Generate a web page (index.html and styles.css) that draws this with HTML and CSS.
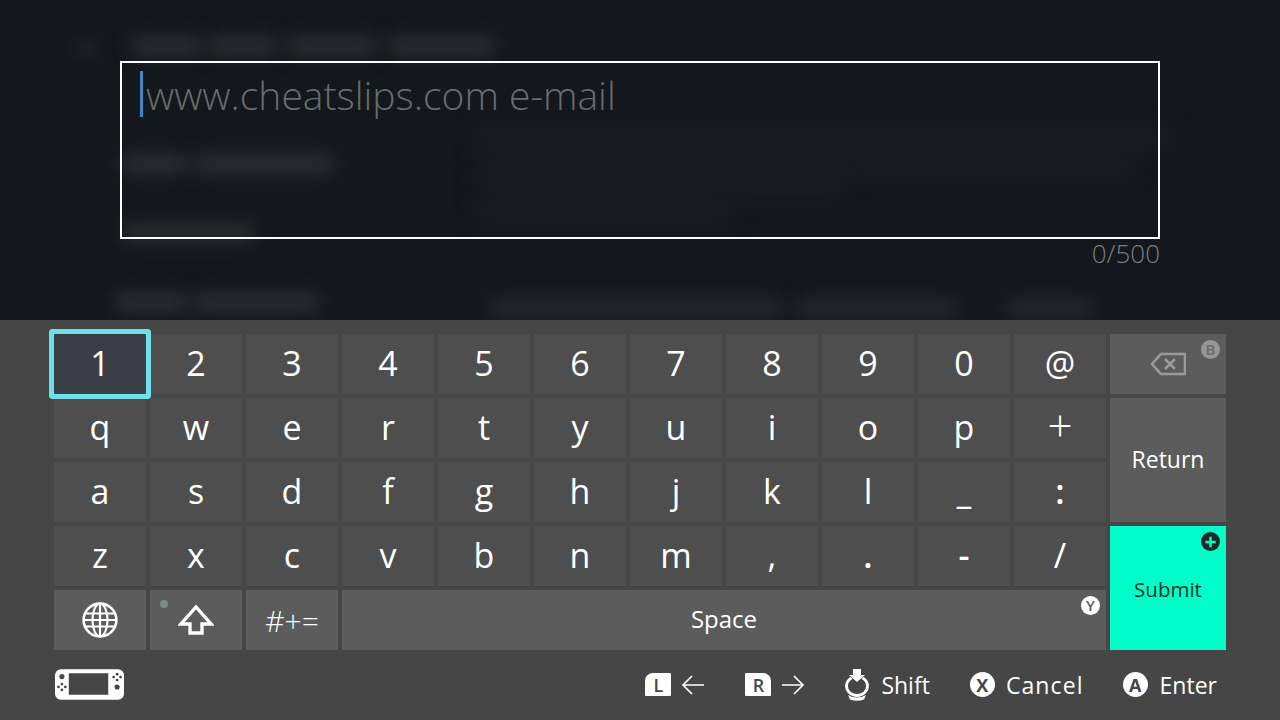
FILE: index.html
```html
<!DOCTYPE html>
<html lang="en">
<head>
<meta charset="utf-8">
<title>Keyboard</title>
<link rel="stylesheet" href="styles.css">
</head>
<body>
<main class="screen">
  <section class="top">
    <div class="backdrop" aria-hidden="true">
      <i class="smear s1"></i><i class="smear s2a"></i><i class="smear s2b"></i><i class="smear s2c"></i><i class="smear s2d"></i>
      <i class="smear s3a"></i><i class="smear s3b"></i><i class="smear s4"></i><i class="smear s5a"></i><i class="smear s5b"></i>
      <i class="smear faint s6"></i><i class="smear faint s7"></i><i class="smear faint s8"></i><i class="smear faint s9"></i>
      <i class="smear s10a"></i><i class="smear s10b"></i><i class="smear s10c"></i>
    </div>
    <div class="field">
      <span class="caret"></span><span class="placeholder">www.cheatslips.com e-mail</span>
    </div>
    <div class="count">0/500</div>
  </section>
  <section class="panel">
    <div class="keys">
      <button class="key selected">1</button><button class="key">2</button><button class="key">3</button><button class="key">4</button><button class="key">5</button><button class="key">6</button><button class="key">7</button><button class="key">8</button><button class="key">9</button><button class="key">0</button><button class="key">@</button>
      <button class="key fn backspace">
        <svg viewBox="0 0 36 24" width="36" height="24"><path d="M35 2H11L2 12l9 10h24z" fill="none" stroke="#9a9a9a" stroke-width="2.6"/><path d="M15 7l10 10M25 7L15 17" stroke="#9a9a9a" stroke-width="2.6" fill="none"/></svg>
        <span class="badge b-grey">B</span>
      </button>
      <button class="key">q</button><button class="key">w</button><button class="key">e</button><button class="key">r</button><button class="key">t</button><button class="key">y</button><button class="key">u</button><button class="key">i</button><button class="key">o</button><button class="key">p</button><button class="key big">+</button>
      <button class="key fn label return">Return</button>
      <button class="key">a</button><button class="key">s</button><button class="key">d</button><button class="key">f</button><button class="key">g</button><button class="key">h</button><button class="key">j</button><button class="key">k</button><button class="key">l</button><button class="key bold">_</button><button class="key bold">:</button>
      <button class="key">z</button><button class="key">x</button><button class="key">c</button><button class="key">v</button><button class="key">b</button><button class="key">n</button><button class="key">m</button><button class="key">,</button><button class="key bold">.</button><button class="key bold">-</button><button class="key">/</button>
      <button class="key submit label">Submit
        <span class="badge b-dark"><svg viewBox="0 0 20 20" width="20" height="20"><path d="M10 4.5v11M4.5 10h11" stroke="#00ffc8" stroke-width="2.6"/></svg></span>
      </button>
      <button class="key fn">
        <svg viewBox="0 0 36 36" width="36" height="36" fill="none" stroke="#fff" stroke-width="2.2"><circle cx="18" cy="18" r="16.4" stroke-width="2.6"/><ellipse cx="18" cy="18" rx="7.5" ry="16.4"/><path d="M18 2v32M3 11.5h30M2 18h32M3 24.5h30"/></svg>
      </button>
      <button class="key fn shift">
        <span class="dot"></span>
        <svg viewBox="0 0 36 32" width="36" height="32"><path d="M18 3L3 20h9v9h12v-9h9z" fill="none" stroke="#fff" stroke-width="3.4" stroke-linejoin="miter"/></svg>
      </button>
      <button class="key fn label sym">#+=</button>
      <button class="key fn label space">Space<span class="badge b-white">Y</span></button>
    </div>
    <footer class="hints">
      <svg viewBox="0 0 70 31" width="69" height="31">
        <path fill-rule="evenodd" fill="#fff" d="M6 0h58a6 6 0 0 1 6 6v19a6 6 0 0 1-6 6H6a6 6 0 0 1-6-6V6a6 6 0 0 1 6-6zM14 4v22h40V4z"/>
        <g fill="#464646"><circle cx="7" cy="7.500" r="2.600"/><circle cx="63" cy="18" r="2.600"/><circle cx="7" cy="15" r="1.400"/><circle cx="3.500" cy="18" r="1.400"/><circle cx="10.500" cy="18" r="1.400"/><circle cx="7" cy="21" r="1.400"/><circle cx="63" cy="5" r="1.400"/><circle cx="59.500" cy="8" r="1.400"/><circle cx="66.500" cy="8" r="1.400"/><circle cx="63" cy="11" r="1.400"/></g>
      </svg>
      <div class="hint-list">
        <div class="hint arrows">
          <span class="shoulder left">L</span>
          <svg viewBox="0 0 24 20" width="24" height="20"><path d="M23 10H2M11 1l-9 9 9 9" fill="none" stroke="#fff" stroke-width="1.700"/></svg>
        </div>
        <div class="hint arrows tight">
          <span class="shoulder right">R</span>
          <svg viewBox="0 0 24 20" width="24" height="20"><path d="M1 10h21M13 1l9 9-9 9" fill="none" stroke="#fff" stroke-width="1.700"/></svg>
        </div>
        <div class="hint stick">
          <svg viewBox="0 0 28 34" width="28" height="34">
            <ellipse cx="14" cy="18" rx="10.500" ry="9.500" fill="none" stroke="#fff" stroke-width="2.800"/>
            <path d="M5 27q9 5 18 0l-2 4.500q-7 2.500-14 0z" fill="#fff"/>
            <path d="M10 1h8v6h4l-8 7-8-7h4z" fill="#fff" stroke="#464646" stroke-width="1.200" paint-order="stroke"/>
          </svg>
          <span>Shift</span>
        </div>
        <div class="hint cancel"><span class="btn">X</span><span class="wide">Cancel</span></div>
        <div class="hint enter"><span class="btn">A</span><span>Enter</span></div>
      </div>
    </footer>
  </section>
</main>
</body>
</html>
```
FILE: styles.css
```css
* { box-sizing: border-box; }
html, body { margin: 0; padding: 0; }
body { width: 1280px; height: 720px; overflow: hidden; background: #13181c; font-family: "Open Sans", "Noto Sans", sans-serif; color: #fff; }
.screen { display: flex; flex-direction: column; width: 1280px; height: 720px; }

.top { position: relative; height: 320px; padding: 61px 120px 0; background: #13181c; overflow: hidden; }
.backdrop { position: absolute; inset: 0; }
.smear { position: absolute; display: block; background: #2a2e32; border-radius: 8px; filter: blur(9px); }
.smear.faint { background: #191e22; filter: blur(10px); }
.s1 { left: 74px; top: 42px; width: 24px; height: 14px; background: #22272a; }
.s2a { left: 132px; top: 36px; width: 72px; height: 20px; }
.s2b { left: 208px; top: 36px; width: 70px; height: 20px; }
.s2c { left: 286px; top: 36px; width: 92px; height: 20px; }
.s2d { left: 388px; top: 36px; width: 108px; height: 20px; }
.s3a { left: 120px; top: 154px; width: 70px; height: 20px; }
.s3b { left: 194px; top: 154px; width: 142px; height: 20px; }
.s4 { left: 120px; top: 224px; width: 136px; height: 18px; }
.s5a { left: 114px; top: 292px; width: 76px; height: 20px; }
.s5b { left: 194px; top: 292px; width: 126px; height: 20px; }
.s6 { left: 474px; top: 128px; width: 700px; height: 20px; }
.s7 { left: 474px; top: 158px; width: 660px; height: 18px; }
.s8 { left: 474px; top: 182px; width: 370px; height: 16px; }
.s9 { left: 474px; top: 206px; width: 260px; height: 16px; }
.s10a { left: 488px; top: 298px; width: 296px; height: 20px; background: #24292c; }
.s10b { left: 796px; top: 298px; width: 160px; height: 20px; background: #24292c; }
.s10c { left: 1006px; top: 298px; width: 86px; height: 20px; background: #24292c; }

.field { position: relative; display: flex; align-items: flex-start; height: 178px; padding: 9px 18px; border: 2px solid #fff; }
.caret { display: block; width: 3px; height: 46px; margin-top: -1px; background: #3d86c6; }
.placeholder { margin-left: 3px; font-size: 39px; font-weight: 300; line-height: 46px; color: #676c6f; white-space: nowrap; }
.count { position: relative; margin-top: -1px; text-align: right; font-size: 26px; font-weight: 300; line-height: 30px; color: #7a7d80; }

.panel { display: flex; flex-direction: column; height: 400px; background: #464646; padding: 14px 54px 0; }
.keys { display: grid; grid-template-columns: repeat(11, 92px) 116px; grid-auto-rows: 60px; gap: 4px; }
.key { position: relative; display: flex; align-items: center; justify-content: center; margin: 0; padding: 0 0 2px; border: 0; background: #4e4e4e; color: #fff; font-family: inherit; font-size: 34px; font-weight: 400; }
.key.fn { background: #5c5c5c; padding: 0; }
.key.label { font-size: 23px; font-weight: 400; padding: 0 0 3px; }
.key.space { font-size: 24px; }
.key.big { font-size: 44px; font-weight: 300; padding-bottom: 6px; }
.key.bold { font-weight: 600; }
.selected { z-index: 2; background: #3a3f47; box-shadow: 0 0 0 5px #6fe0ea; border-radius: 1px; }
.backspace { grid-column: 12; grid-row: 1; }
.return { grid-column: 12; grid-row: 2 / span 2; }
.key.submit { grid-column: 12; grid-row: 4 / span 2; background: #00ffc8; color: #12312c; font-size: 20.5px; padding: 2px 0 0; }
.space { grid-column: 4 / span 8; }
.key.sym { font-size: 30px; font-weight: 300; padding: 0; }

.badge { position: absolute; top: 6px; right: 6px; display: flex; align-items: center; justify-content: center; width: 19px; height: 19px; border-radius: 50%; font-size: 15px; font-weight: 600; line-height: 1; }
.b-grey { background: #979797; color: #6b6b6b; }
.b-dark { background: #1b2b2a; }
.b-white { background: #fff; color: #5c5c5c; }
.dot { position: absolute; left: 10px; top: 10px; width: 8px; height: 8px; border-radius: 50%; background: #7b8c89; }

.hints { display: flex; align-items: center; justify-content: space-between; margin-top: 19px; padding: 0 9px 0 1px; height: 31px; }
.hint-list { display: flex; align-items: center; gap: 40px; }
.hint { display: flex; align-items: center; gap: 11px; font-size: 23px; font-weight: 400; }
.hint.arrows { gap: 10px; }
.hint.tight { margin-right: -2px; }
.hint.stick { gap: 10px; }
.hint.cancel { margin-right: -1px; }
.hint.enter { gap: 12px; }
.wide { letter-spacing: 1.100px; }
.shoulder { display: flex; align-items: center; justify-content: center; width: 26px; height: 23px; background: #fff; color: #464646; font-size: 18px; font-weight: 600; }
.shoulder.left { border-radius: 8px 1px 1px 1px; }
.shoulder.right { border-radius: 1px 8px 1px 1px; }
.btn { display: flex; align-items: center; justify-content: center; width: 25px; height: 25px; border-radius: 50%; background: #fff; color: #464646; font-size: 18px; font-weight: 700; }
```
